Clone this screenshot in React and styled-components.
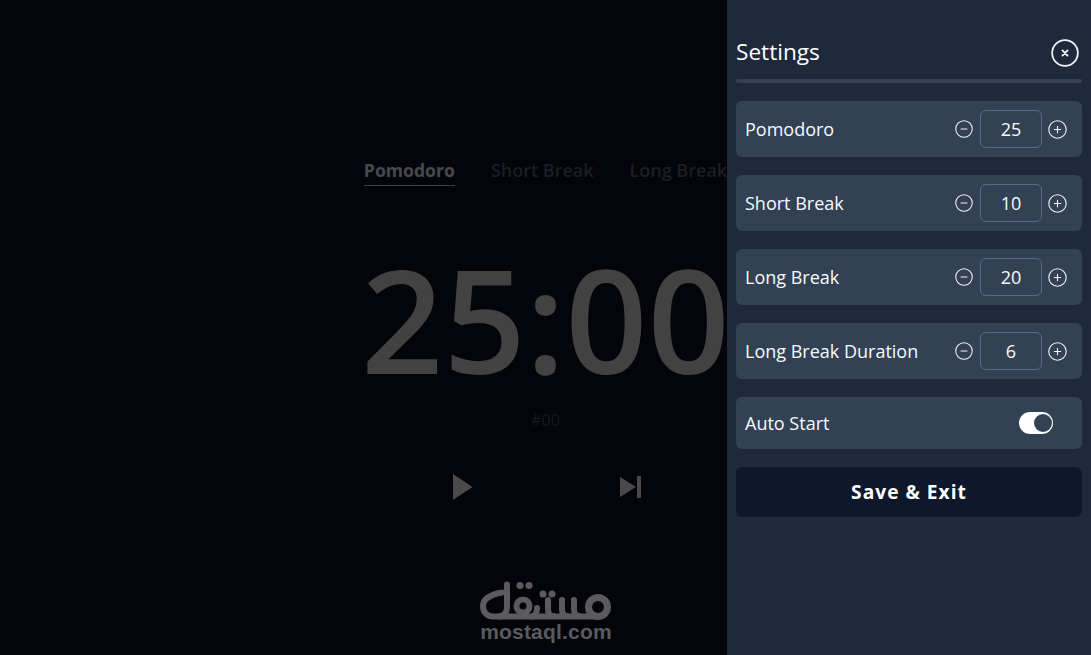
import React from "react";
import styled, { createGlobalStyle } from "styled-components";

const Global = createGlobalStyle`
  html, body { margin: 0; padding: 0; height: 100%; background: #03050b; overflow: hidden; }
  #root { height: 100%; }
  * { box-sizing: border-box; }
`;

const Page = styled.div`
  position: relative;
  width: 100%;
  height: 655px;
  overflow: hidden;
  background: #03050b;
  font-family: "Open Sans", sans-serif;
`;

const Main = styled.main`
  display: flex;
  flex-direction: column;
  align-items: center;
  padding-top: 158px;
`;

const Tabs = styled.nav`
  display: flex;
  gap: 36px;
`;

const Tab = styled.div`
  font-size: ${(p) => (p.$active ? 17.6 : 18)}px;
  line-height: 25px;
  padding-bottom: 2px;
  font-weight: ${(p) => (p.$active ? 700 : 600)};
  color: ${(p) => (p.$active ? "#47494c" : "#1c1e22")};
  border-bottom: 1px solid ${(p) => (p.$active ? "#3c3e42" : "transparent")};
`;

const Timer = styled.div`
  margin-top: 42px;
  font-size: 144px;
  line-height: 180px;
  font-weight: 600;
  color: #424242;
`;

const Counter = styled.div`
  margin-top: 1px;
  font-size: 16px;
  line-height: 22px;
  color: #17191c;
`;

const Controls = styled.div`
  display: flex;
  align-items: center;
  gap: 147px;
  margin: 41px 0 0 3px;
  color: #4a4a4a;
  height: 30px;
`;

const Logo = styled.div`
  position: absolute;
  left: 479px;
  top: 581px;
  width: 134px;
  color: #5b5b5e;
  text-align: center;
`;

const LogoSvg = styled.svg`
  display: block;
`;

const LogoLatin = styled.div`
  font-family: "Liberation Sans", sans-serif;
  font-weight: 700;
  font-size: 21px;
  line-height: 20px;
  letter-spacing: 0.2px;
  margin-top: 1px;
`;

const Panel = styled.aside`
  position: absolute;
  top: 0;
  right: 0;
  bottom: 0;
  width: 364px;
  padding: 0 9px;
  background: #1e293b;
  color: #f8fafc;
`;

const Header = styled.header`
  display: flex;
  align-items: center;
  justify-content: space-between;
  height: 79px;
  padding: 26px 3px 0 0;
`;

const Title = styled.h2`
  margin: -1px 0 0;
  font-size: 22.6px;
  line-height: 30px;
  font-weight: 400;
  color: #fff;
`;

const Divider = styled.div`
  height: 4px;
  border-radius: 2px;
  background: #334155;
  margin-bottom: 18px;
`;

const Stack = styled.div`
  display: flex;
  flex-direction: column;
  gap: 18px;
`;

const Row = styled.div`
  display: flex;
  align-items: center;
  height: ${(p) => p.$h || 56}px;
  padding: 0 15px 0 9px;
  background: #334155;
  border-radius: 6px;
`;

const Label = styled.span`
  flex: 1;
  font-size: 18px;
  line-height: 24px;
  color: #f8fafc;
`;

const Stepper = styled.div`
  display: flex;
  align-items: center;
  gap: 6px;
`;

const IconButton = styled.span`
  display: flex;
  width: ${(p) => p.$size}px;
  height: ${(p) => p.$size}px;
  color: #f1f5f9;
`;

const NumberBox = styled.div`
  width: 62px;
  height: 38px;
  margin-left: 1px;
  border: 1px solid #5b6a80;
  border-radius: 6px;
  display: flex;
  align-items: center;
  justify-content: center;
  font-size: 18px;
  color: #f8fafc;
`;

const Toggle = styled.div`
  display: flex;
  justify-content: flex-end;
  align-items: center;
  width: 34px;
  height: 22px;
  padding: 2px 1px;
  margin-right: 14px;
  border-radius: 11px;
  background: #fff;
`;

const Knob = styled.div`
  width: 18px;
  height: 18px;
  border-radius: 50%;
  background: #334155;
`;

const SaveButton = styled.div`
  height: 50px;
  display: flex;
  align-items: center;
  justify-content: center;
  border-radius: 6px;
  background: #0f172a;
  color: #fff;
  font-size: 19.2px;
  line-height: 24px;
  font-weight: 700;
  letter-spacing: 1px;
`;

const Circle = ({ kind, size }) => (
  <IconButton $size={size}>
    <svg viewBox="0 0 24 24" width={size} height={size} fill="none" stroke="currentColor" strokeWidth={size > 24 ? 1.5 : 1.4} strokeLinecap="round">
      <circle cx="12" cy="12" r="11" />
      {kind === "x" ? (
        <path d="M9.800 9.800l4.400 4.400M14.200 9.800l-4.400 4.400" strokeWidth="1.600" />
      ) : (
        <path d={kind === "plus" ? "M8 12h8M12 8v8" : "M8 12h8"} />
      )}
    </svg>
  </IconButton>
);

const NumberRow = ({ label, value }) => (
  <Row>
    <Label>{label}</Label>
    <Stepper>
      <Circle kind="minus" size={18} />
      <NumberBox>{value}</NumberBox>
      <Circle kind="plus" size={19} />
    </Stepper>
  </Row>
);

const PlayIcon = () => (
  <svg width="20" height="26" viewBox="0 0 20 26" fill="currentColor">
    <path d="M0 0l19.500 13L0 26z" />
  </svg>
);

const SkipIcon = () => (
  <svg width="21" height="22" viewBox="0 0 21 22" fill="currentColor">
    <path d="M0 1l16 10L0 21zM17 0H21V22H17z" />
  </svg>
);

const LogoMark = () => (
  <LogoSvg width="134" height="40" viewBox="0 0 134 40" fill="none" stroke="currentColor" strokeWidth="6" strokeLinecap="round" strokeLinejoin="round">
    <path d="M23 11.500C12 13.500 4 18 4 25c0 6 4 10.500 10 10.500H118" />
    <path d="M28 3.500V26c0 5-3 9.500-8 9.500" />
    <circle cx="44" cy="25" r="6.500" />
    <path d="M52 35.500C56 35.500 58 32 58 27M69 19v9c0 4 2 7 5 7M83 19v9c0 4 2 7 5 7M95 19v9c0 4 2 7 5 7" />
    <circle cx="119" cy="26" r="9.500" strokeWidth="7" />
    <g fill="currentColor" stroke="none">
      <circle cx="41" cy="4.500" r="3.500" />
      <circle cx="50" cy="4.500" r="3.500" />
      <circle cx="64" cy="13" r="3.500" />
      <circle cx="73" cy="13" r="3.500" />
    </g>
  </LogoSvg>
);

export default function App() {
  return (
    <Page>
      <Global />
      <Main>
        <Tabs>
          <Tab $active>Pomodoro</Tab>
          <Tab>Short Break</Tab>
          <Tab>Long Break</Tab>
        </Tabs>
        <Timer>25:00</Timer>
        <Counter>#00</Counter>
        <Controls>
          <PlayIcon />
          <SkipIcon />
        </Controls>
      </Main>
      <Logo>
        <LogoMark />
        <LogoLatin>mostaql.com</LogoLatin>
      </Logo>
      <Panel>
        <Header>
          <Title>Settings</Title>
          <Circle kind="x" size={28} />
        </Header>
        <Divider />
        <Stack>
          <NumberRow label="Pomodoro" value="25" />
          <NumberRow label="Short Break" value="10" />
          <NumberRow label="Long Break" value="20" />
          <NumberRow label="Long Break Duration" value="6" />
          <Row $h={52}>
            <Label>Auto Start</Label>
            <Toggle>
              <Knob />
            </Toggle>
          </Row>
          <SaveButton>Save &amp; Exit</SaveButton>
        </Stack>
      </Panel>
    </Page>
  );
}
